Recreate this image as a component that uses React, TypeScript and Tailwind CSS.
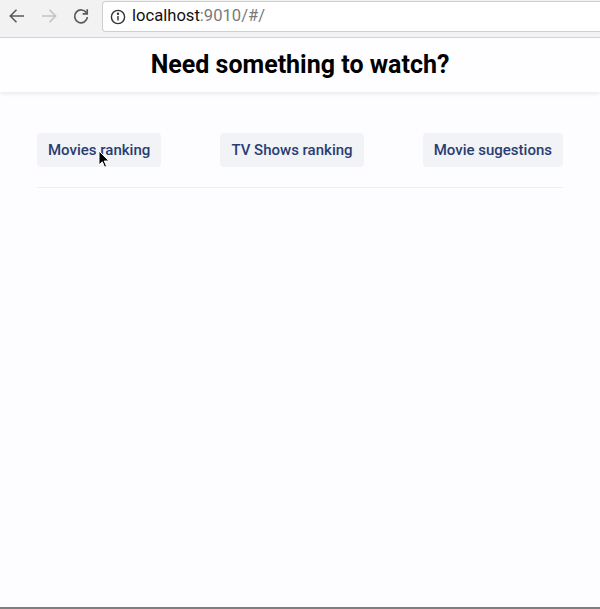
const links = ["Movies ranking", "TV Shows ranking", "Movie sugestions"];

const BrowserBar = () => (
  <div className="h-[38px] bg-[#f2f2f2] border-b border-[#d6d6d6] flex items-start">
    <div className="flex items-center h-[32px] pl-[7px] gap-[12px]">
      <svg width="20" height="20" viewBox="0 0 20 20" fill="none" stroke="#5a5a5a" strokeWidth="1.6">
        <path d="M17 10H3.5M9.5 3.8L3.3 10l6.2 6.2" />
      </svg>
      <svg width="20" height="20" viewBox="0 0 20 20" fill="none" stroke="#c4c4c4" strokeWidth="1.6">
        <path d="M3 10h13.5M10.5 3.8l6.2 6.2-6.2 6.2" />
      </svg>
      <svg width="20" height="20" viewBox="0 0 20 20" fill="none" stroke="#5a5a5a" strokeWidth="1.7">
        <path d="M15.6 7.2A6.4 6.4 0 1 0 16.4 11" />
        <path d="M16.2 3.2v4.6h-4.6" />
      </svg>
    </div>
    <div className="ml-[11px] mt-[1px] h-[31px] flex-1 bg-white border border-r-0 border-[#cfcfcf] rounded-l-[4px] flex items-center pl-[7px] gap-[6px]">
      <svg width="16" height="16" viewBox="0 0 16 16" fill="none" stroke="#333" strokeWidth="1.4">
        <circle cx="8" cy="8" r="6.6" />
        <path d="M8 7v4.4" />
        <circle cx="8" cy="4.8" r="0.5" fill="#333" />
      </svg>
      <span className="text-[16.6px] font-['Roboto',sans-serif] text-[#111] leading-none">
        localhost<span className="text-[#7a7a7a]">:9010/#/</span>
      </span>
    </div>
  </div>
);

const App = () => {
  return (
    <div className="h-[609px] w-[600px] overflow-hidden bg-[#fdfcff] flex flex-col border-b-2 border-[#808080] font-['Roboto',sans-serif]">
      <BrowserBar />

      {/* Header */}
      <header className="h-[54px] bg-[#fefdff] flex items-center justify-center shadow-[0_2px_4px_rgba(0,0,0,0.08)] relative z-10">
        <h1 className="text-[25px] font-bold text-black">Need something to watch?</h1>
      </header>

      {/* Nav */}
      <div className="px-[37px] pt-[41px]">
        <nav className="flex justify-between pb-[20px] border-b border-[#eef0f4]">
          {links.map((name) => (
            <button
              key={name}
              className="h-[34px] px-[11px] rounded-[4px] bg-[#f1f3f7] text-[15px] font-medium text-[#2a3d72]"
            >
              {name}
            </button>
          ))}
        </nav>
      </div>

      {/* Cursor */}
      <svg className="absolute left-[98px] top-[150px]" width="12" height="19" viewBox="0 0 12 19">
        <path d="M1 1v14l3.3-3.2 2.3 5.4 2-.9-2.3-5.3H11z" fill="#000" stroke="#fff" strokeWidth="1" />
      </svg>
    </div>
  );
};

export default App;
